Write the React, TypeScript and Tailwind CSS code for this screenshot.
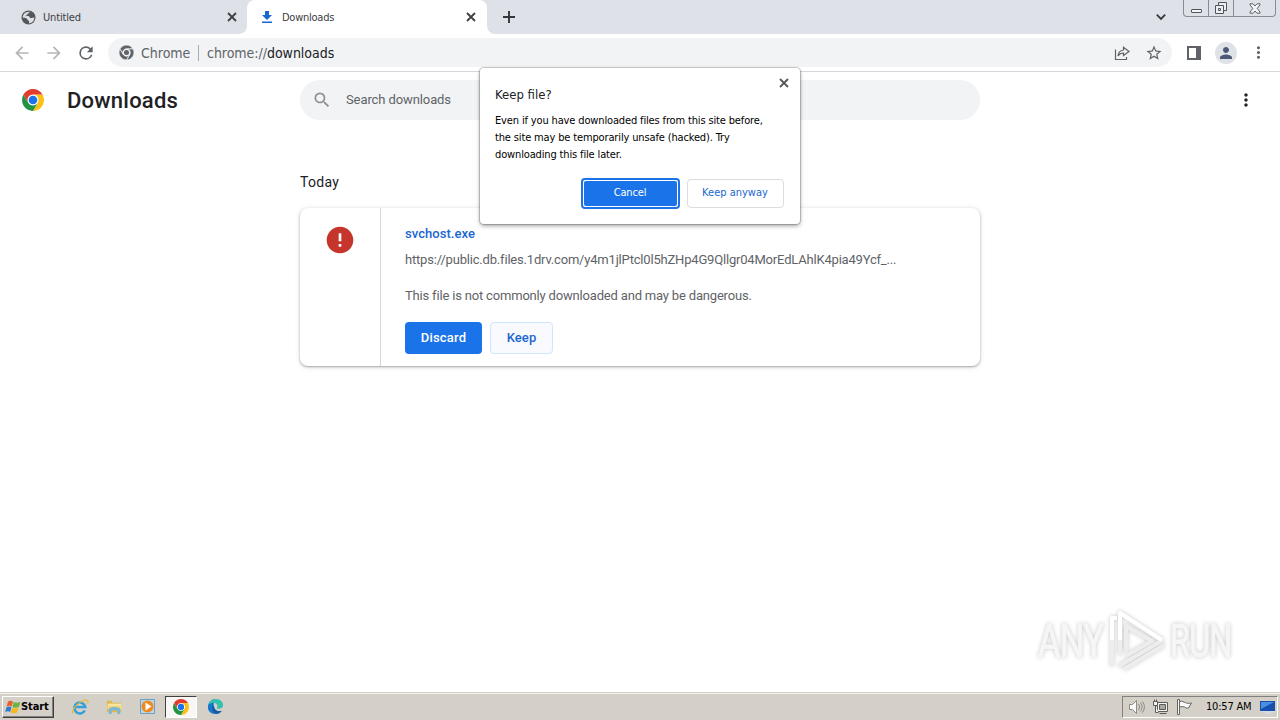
import React from "react";

const ui = "font-['DejaVu_Sans_Condensed','DejaVu_Sans',sans-serif] [font-stretch:condensed]";

function ChromeLogo({ className, gray = false }: { className: string; gray?: boolean }) {
  const c = gray ? ["#5f6368", "#5f6368", "#5f6368", "#5f6368"] : ["#e33b2e", "#fbc116", "#229342", "#1a73e8"];
  const edge = gray ? { stroke: "#f1f3f4", strokeWidth: 2.5 } : {};
  return (
    <svg viewBox="0 0 48 48" className={className}>
      <circle cx="24" cy="24" r="12.5" fill={gray ? "#f1f3f4" : "#fff"} />
      <path fill={c[1]} {...edge} d="M34.39 30 24 48A24 24 0 0 0 44.78 12H24a12 12 0 0 1 10.39 18Z" />
      <path fill={c[2]} {...edge} d="M13.61 30 3.22 12A24 24 0 0 0 24 48l10.39-18a12 12 0 0 1-20.78 0Z" />
      <path fill={c[0]} {...edge} d="M24 12h20.78A24 24 0 0 0 3.22 12l10.39 18A12 12 0 0 1 24 12Z" />
      <circle cx="24" cy="24" r={gray ? 8 : 9.5} fill={c[3]} />
    </svg>
  );
}

function Cross({ className }: { className: string }) {
  return (
    <svg viewBox="0 0 10 10" className={className} fill="none" stroke="currentColor" strokeWidth="1.8">
      <path d="M1 1l8 8M9 1L1 9" />
    </svg>
  );
}

function Icon({ d, className }: { d: string; className: string }) {
  return (
    <svg viewBox="0 0 24 24" className={className} fill="currentColor">
      <path d={d} />
    </svg>
  );
}

const dots = "M12 8c1.1 0 2-.9 2-2s-.9-2-2-2-2 .9-2 2 .9 2 2 2zm0 2c-1.1 0-2 .9-2 2s.9 2 2 2 2-.9 2-2-.9-2-2-2zm0 6c-1.1 0-2 .9-2 2s.9 2 2 2 2-.9 2-2-.9-2-2-2z";

function Globe() {
  return (
    <svg viewBox="0 0 15 15" className="size-[15px]">
      <circle cx="7.5" cy="7.5" r="7" fill="#54575c" />
      <path fill="#dee1e8" d="M8.500 1.800c.6 1-.2 1.800-1.200 2-.3 1-1.600.8-1.600 1.800 0 .8 2.600.2 3 1.600.2.900 1 1 2 .8l2.600-.6c0 3-2.200 5.800-5.300 5.900l.2-1.800c-.2-1-1.600-.8-1.900-1.900-.2-.9-.8-1.600-1.700-1.700L1.700 7.600C1.700 4.400 4.500 1.500 8.500 1.800z" />
      <path fill="#54575c" d="M3.500 6.500 6 4l2.500-2.200L10 3 8.500 5l-2 .8z" opacity=".5" />
    </svg>
  );
}

function TabStrip() {
  return (
    <div className="flex h-[34px] bg-[#dee1e8] text-[#3c4043]">
      <div className="flex w-[247px] items-center pl-[21px] pr-[10px]">
        <Globe />
        <span className={ui + " ml-[7px] flex-1 text-[11px] leading-none tracking-[-0.15px]"}>Untitled</span>
        <Cross className="size-[10px]" />
      </div>
      <div className="relative flex w-[240px] items-center rounded-t-[8px] bg-white pl-[13px] pr-[11px]">
        <svg viewBox="0 0 8 8" className="absolute -left-2 bottom-0 size-2"><path d="M8 0v8H0A8 8 0 0 0 8 0Z" fill="#fff" /></svg>
        <svg viewBox="0 0 8 8" className="absolute -right-2 bottom-0 size-2"><path d="M0 0v8h8A8 8 0 0 1 0 0Z" fill="#fff" /></svg>
        <svg viewBox="0 0 14 14" className="size-[14px]" fill="#1967d2">
          <path d="M5 1h4v4h3L7 10 2 5h3zM2 11.500h10V13H2z" />
        </svg>
        <span className={ui + " ml-[8px] flex-1 text-[11px] leading-none tracking-[-0.25px]"}>Downloads</span>
        <Cross className="size-[10px]" />
      </div>
      <div className="flex w-[44px] items-center justify-center">
        <svg viewBox="0 0 12 12" className="size-[12px]" stroke="#34373b" strokeWidth="1.9"><path d="M6 0v12M0 6h12" /></svg>
      </div>
      <div className="flex flex-1 items-center justify-end pr-[17px]">
        <svg viewBox="0 0 10 7" className="size-[10px]" fill="none" stroke="#34373b" strokeWidth="1.8"><path d="M.8 1.200 5 5.400l4.200-4.200" /></svg>
      </div>
      <div className="mr-1 flex h-[17px] w-[93px] rounded-b-[4px] border border-t-0 border-[#878b94] text-[#50545b]">
        <div className="flex w-[25px] items-end justify-center border-r border-[#878b94] pb-[3px]">
          <div className="h-[4px] w-[11px] rounded-[1px] border border-current bg-[#f4f5f8]" />
        </div>
        <div className="flex w-[25px] items-center justify-center border-r border-[#878b94]">
          <svg viewBox="0 0 14 14" className="size-[14px]" fill="#eceef2" stroke="currentColor">
            <path d="M4.500 1.500h8v8h-8z" /><path d="M1.500 4.500h8v8h-8z" /><path d="M4.500 7.500h2v2h-2z" />
          </svg>
        </div>
        <div className="flex flex-1 items-center justify-center">
          <svg viewBox="0 0 12 11" className="h-[11px] w-[12px]" fill="#f4f5f8" stroke="currentColor" strokeWidth=".9">
            <path d="M1 .8h3L6 3l2-2.200h3v1L8.200 5.500 11 9v1.200H8L6 8l-2 2.200H1V9l2.800-3.500L1 1.800z" />
          </svg>
        </div>
      </div>
    </div>
  );
}

function Toolbar() {
  return (
    <div className="flex h-[38px] items-center border-b border-[#d5d7da] pl-[12px] text-[#5f6368]">
      <Icon className="size-5 text-[#b4b6b9]" d="M20 11H7.830l5.590-5.590L12 4l-8 8 8 8 1.410-1.410L7.830 13H20v-2z" />
      <Icon className="ml-3 size-5 text-[#b4b6b9]" d="M12 4l-1.410 1.410L16.170 11H4v2h12.170l-5.580 5.590L12 20l8-8z" />
      <Icon className="ml-3 size-5" d="M17.650 6.350A7.950 7.950 0 0 0 12 4a8 8 0 1 0 7.730 10h-2.080A6 6 0 1 1 12 6c1.660 0 3.140.69 4.220 1.780L13 11h7V4l-2.350 2.350z" />
      <div className="ml-3 flex h-[29px] w-[1064px] items-center rounded-full bg-[#f1f3f5] pl-[11px] pr-[9px]">
        <ChromeLogo gray className="size-[15px]" />
        <span className={ui + " ml-[7px] w-[50px] text-[14px] leading-none"}>Chrome</span>
        <span className="ml-[7px] h-4 w-px bg-[#a9acb0]" />
        <span className={ui + " ml-[8px] flex-1 text-[14px] leading-none tracking-[-0.03px]"}>chrome://<span className="text-[#202124]">downloads</span></span>
        <svg viewBox="0 0 16 16" className="size-4" fill="none" stroke="currentColor" strokeWidth="1.200">
          <path d="M1.500 4.500v10h11v-2.500M9.500 5V2.200L15 6.500 9.500 10.500V8C7 8 5.300 8.800 4 11c.3-3.500 2.300-5.600 5.500-6z" />
        </svg>
        <Icon className="ml-[15px] size-[18px]" d="M22 9.240l-7.190-.62L12 2 9.190 8.630 2 9.240l5.460 4.730L5.820 21 12 17.270 18.180 21l-1.630-7.030L22 9.240zM12 15.400l-3.760 2.270 1-4.280-3.320-2.880 4.380-.38L12 6.100l1.710 4.040 4.380.38-3.320 2.880 1 4.280L12 15.400z" />
      </div>
      <div className="ml-[15px] h-[14px] w-[14px] border-2 border-r-[5px] border-current" />
      <div className="ml-[14px] flex size-[22px] items-center justify-center rounded-full bg-[#dfe2e7]">
        <Icon className="size-[18px] text-[#4c5a79]" d="M12 12c2.210 0 4-1.790 4-4s-1.790-4-4-4-4 1.790-4 4 1.790 4 4 4zm0 2c-2.670 0-8 1.340-8 4v2h16v-2c0-2.660-5.330-4-8-4z" />
      </div>
      <Icon className="ml-[12px] size-[19px]" d={dots} />
    </div>
  );
}

function PageHeader() {
  return (
    <div className="flex h-14 items-center pl-[22px]">
      <ChromeLogo className="size-[22px]" />
      <h1 className="ml-[23px] w-[233px] pt-[2px] text-[22px] font-medium leading-none tracking-[0.22px] text-[#202124]">Downloads</h1>
      <div className="flex h-10 w-[680px] items-center rounded-full bg-[#f1f3f4] pl-[12px] text-[#5f6368]">
        <Icon className="size-5 text-[#8b8e92]" d="M15.500 14h-.79l-.28-.27A6.470 6.470 0 0 0 16 9.500 6.500 6.500 0 1 0 9.500 16c1.610 0 3.090-.59 4.230-1.570l.27.28v.79l5 4.990L20.490 19l-4.990-5zm-6 0C7.010 14 5 11.990 5 9.500S7.010 5 9.500 5 14 7.010 14 9.500 11.990 14 9.500 14z" />
        <span className="ml-[14px] pb-px text-[13px] leading-none tracking-[-0.1px]">Search downloads</span>
      </div>
      <Icon className="ml-[256px] size-5 text-[#202124]" d={dots} />
    </div>
  );
}

function DownloadCard() {
  return (
    <div className="flex h-[158px] w-[680px] rounded-[8px] bg-white text-[13px] text-[#5f6368] shadow-[0_1px_2px_rgba(60,64,67,0.35),0_1px_4px_1px_rgba(60,64,67,0.15)]">
      <div className="flex w-[81px] justify-center border-r border-[#d5d7da] pt-[16px]">
        <Icon className="size-8 text-[#c5352b]" d="M12 2C6.480 2 2 6.480 2 12s4.480 10 10 10 10-4.480 10-10S17.520 2 12 2zm1 15h-2v-2h2v2zm0-4h-2V7h2v6z" />
      </div>
      <div className="flex flex-col items-start pl-6 pt-[18px]">
        <div className="h-[26px] font-medium leading-[16px] tracking-[0.05px] text-[#1967d2]">svchost.exe</div>
        <div className="h-9 leading-[16px] tracking-[-0.19px]">https://public.db.files.1drv.com/y4m1jlPtcl0l5hZHp4G9Qllgr04MorEdLAhlK4pia49Ycf_...</div>
        <div className="h-[34px] leading-[16px] tracking-[-0.18px]">This file is not commonly downloaded and may be dangerous.</div>
        <div className="flex gap-2 font-medium">
          <button className="h-8 w-[77px] rounded-[4px] bg-[#1a73e8] tracking-[0.2px] text-white">Discard</button>
          <button className="h-8 w-[63px] rounded-[4px] border border-[#d2e3fc] bg-[#f8fafe] tracking-[0.1px] text-[#1967d2]">Keep</button>
        </div>
      </div>
    </div>
  );
}

function KeepDialog() {
  return (
    <div className={ui + " absolute left-[480px] top-[68px] h-[156px] w-[320px] rounded-[4px] bg-white text-[11px] text-[#202124] shadow-[0_0_1px_1px_rgba(0,0,0,0.2),0_2px_4px_rgba(0,0,0,0.35)]"}>
      <div className="flex justify-between pl-[15px] pr-[11px] pt-[10px]">
        <div className="pt-[9px] text-[13px] leading-[15px]">Keep file?</div>
        <Cross className="size-[10px] text-[#54575c]" />
      </div>
      <p className="pl-[15px] pt-[10px] leading-[17px] tracking-[-0.145px] text-black">
        Even if you have downloaded files from this site before,<br />the site may be temporarily unsafe (hacked). Try<br />downloading this file later.
      </p>
      <div className="flex justify-end gap-[7px] pr-4 pt-[15px]">
        <button className="h-[31px] w-[99px] rounded-[4px] border-2 border-[#1a73e8] bg-white p-px text-white">
          <span className="flex h-full items-center justify-center rounded-[2px] bg-[#1a73e8] pr-px tracking-[-0.15px]">Cancel</span>
        </button>
        <button className="mt-px h-[29px] w-[97px] rounded-[4px] border border-[#dadce0] pr-px text-[#1967d2]">Keep anyway</button>
      </div>
    </div>
  );
}

function Watermark() {
  return (
    <div className="absolute left-[1038px] top-[608px] flex h-[66px] w-[198px] items-center justify-between text-[#f6f6f6] drop-shadow-[0_0_2px_rgba(0,0,0,0.22)]">
      <span className="w-[66px] origin-left scale-x-[0.75] text-[46px] leading-none tracking-[-1px] [-webkit-text-stroke:1px_#f6f6f6]">ANY</span>
      <svg viewBox="0 0 60 66" className="h-[66px] w-[60px]" fill="none" stroke="#ededed" strokeWidth="4" strokeLinejoin="round">
        <path d="M5 58 5 10h5M13 47V5l42 27.500L12 58M17 61l40-24M19 42V18l26 15-26 15" />
        <path stroke="#fff" d="M5 32V10h5M13 32V5l42 27" />
      </svg>
      <span className="w-[66px] origin-left scale-x-[0.7] text-[46px] leading-none tracking-[-1px] [-webkit-text-stroke:1px_#f6f6f6]">RUN</span>
    </div>
  );
}

function Taskbar() {
  return (
    <div className={ui + " flex h-[28px] items-center border-t border-[#d4d0c8] bg-[#d4d0c8] pl-[2px] pr-[2px] text-[11px] text-black shadow-[inset_0_1px_0_#f4f3f0]"}>
      <div className="flex h-[22px] w-[52px] items-center border border-b-[#404040] border-l-white border-r-[#404040] border-t-white pl-[2px] shadow-[inset_-1px_-1px_0_#808080]">
        <svg viewBox="0 0 16 16" className="size-4">
          <path fill="#e8602c" d="M3 2.500c2-1.300 3.500-1 5 0L6.700 7.500C5 6.500 3.500 6.500 1.700 7.500z" />
          <path fill="#6cb33f" d="M8.700 3c2 1 4.600 1 6.800 0l-1.500 4.800c-2 1.200-4.600 1-6.500.2z" />
          <path fill="#2b7bd0" d="M1.400 8.400c1.800-1.100 3.300-1 5-.1L5.200 13C3.600 12 2 12.100.2 13z" />
          <path fill="#f5b81c" d="M7.200 8.800c2 .9 4.500.9 6.500-.2l-1.500 4.800c-2 1-4.500 1.100-6.400 0z" />
        </svg>
        <span className="pt-[2px] font-bold tracking-[-0.1px]">Start</span>
      </div>
      <div className="ml-[9px] flex items-center">
        <div className="flex w-[34px] justify-center">
          <svg viewBox="0 0 18 18" className="size-[18px]" fill="none">
            <path d="M13.800 12.500A5.500 5.500 0 1 1 14.300 9H4.500" stroke="#349fdb" strokeWidth="2.600" />
            <path d="M2 15.500C-.5 11 12 0 16.500 2.500c1 .6.400 2-.2 3" stroke="#e6b93b" strokeWidth="1.300" />
          </svg>
        </div>
        <div className="flex w-[34px] justify-center">
          <svg viewBox="0 0 18 18" className="size-[17px]">
            <path fill="#dfb650" d="M1 3h5l1 2h9v10H1z" /><path fill="#f9e8a4" d="M2 6h14v6H2z" />
            <path fill="#f1d67d" d="M1 8h16v3H1z" /><path fill="#79b7d9" d="M3 11q6-3 12 0v6h-3v-4H6v4H3z" />
          </svg>
        </div>
        <div className="flex w-[34px] justify-center">
          <svg viewBox="0 0 18 18" className="size-[18px]">
            <path fill="#b9d6ec" stroke="#6f9fc4" d="M1.500 1.500h14v14h-14z" /><circle cx="8.500" cy="8.500" r="6" fill="#f08a1c" /><path fill="#fff" d="M6.500 4.500 12.500 8.500 6.500 12.500z" />
          </svg>
        </div>
        <div className="flex h-[22px] w-[32px] items-center justify-center border border-b-white border-l-[#404040] border-r-white border-t-[#404040] bg-[#f8f7f5]">
          <ChromeLogo className="size-4" />
        </div>
        <div className="flex w-[36px] justify-center">
          <svg viewBox="0 0 18 18" className="size-[17px]">
            <path fill="#1678c9" d="M1 10C1 4 5 1 9.500 1 7 3 6.500 8 8 11c1.300 2.400 4 3.500 7.500 2.500C14 16 11.500 17 9 17c-4.500 0-8-3-8-7z" />
            <path fill="#35c1b0" d="M1.300 7.500C2.300 3.500 5.500 1 9.500 1c4.300 0 7.500 3 7.500 6.500 0 3-2.300 4-5 4-1.300 0-2-.6-1.500-1.200C12 8.500 10.500 5 7 5 4.500 5 2.300 6 1.300 7.500z" />
            <path fill="#1757a6" d="M6 8c-1.500 3 .5 8 4.500 8.800 2.200-.3 4-1.500 5-3.300-3.500 1.500-8-.5-8-4.500z" />
          </svg>
        </div>
      </div>
      <div className="ml-auto flex h-[22px] w-[156px] items-center border border-b-white border-l-[#808080] border-r-white border-t-[#808080] pl-[5px]">
        <svg viewBox="0 0 18 16" className="h-4 w-[18px]" fill="none" stroke="#77756f" strokeWidth=".8">
          <path fill="#fafafa" d="M1.500 5.500h3l4-4v13l-4-4h-3z" /><path d="M10.500 5c1.300 2 1.300 4 0 6M12.500 3.500c2 3 2 6 0 9M14.500 2.500c2.500 3.500 2.500 7.500 0 11" />
        </svg>
        <svg viewBox="0 0 17 16" className="ml-[6px] h-4 w-[17px]" fill="#f4f4f2" stroke="#5e5c57">
          <path d="M5.500 3.500h10v9h-10zM7.500 14.500h7" /><path fill="#aaa8a1" d="M7.500 5.500h6v5h-6z" /><path d="M1.500 2.500h4v4h-4zM2.500.5v2M4.500.5v2M3.500 6.500v7h3" />
        </svg>
        <svg viewBox="0 0 17 16" className="ml-[7px] h-4 w-[17px]" fill="#fafafa" stroke="#66645f">
          <path d="M1.500.5h2v15h-2z" /><path d="M3.500 2.500c3-1 4 1 6 1 1 1 3 1 6 .5l-3 5c-2 .5-3-.5-4-1-2-.5-3-.5-5 0z" />
        </svg>
        <span className="ml-[13px] w-[48px] whitespace-nowrap pt-[2px] tracking-[-0.2px]">10:57 AM</span>
        <svg viewBox="0 0 16 14" className="ml-[6px] h-[14px] w-4">
          <path fill="#174fae" d="M0 1h15v10H0z" /><path fill="#4b8fe0" d="M1 2h13L3 8 1 9z" /><path fill="#d6dae2" d="M0 11h15v1H0zM5 12h6v2H5z" />
        </svg>
      </div>
    </div>
  );
}

export default function App() {
  return (
    <div className="relative flex h-[720px] w-[1280px] flex-col overflow-hidden bg-white font-[Roboto,sans-serif]">
      <TabStrip />
      <Toolbar />
      <main className="flex-1">
        <PageHeader />
        <div className="pl-[300px]">
          <h2 className="pb-[17px] pt-[45px] text-[14px] leading-[18px] tracking-[0.3px] text-[#202124]">Today</h2>
          <DownloadCard />
        </div>
      </main>
      <Taskbar />
      <KeepDialog />
      <Watermark />
    </div>
  );
}
